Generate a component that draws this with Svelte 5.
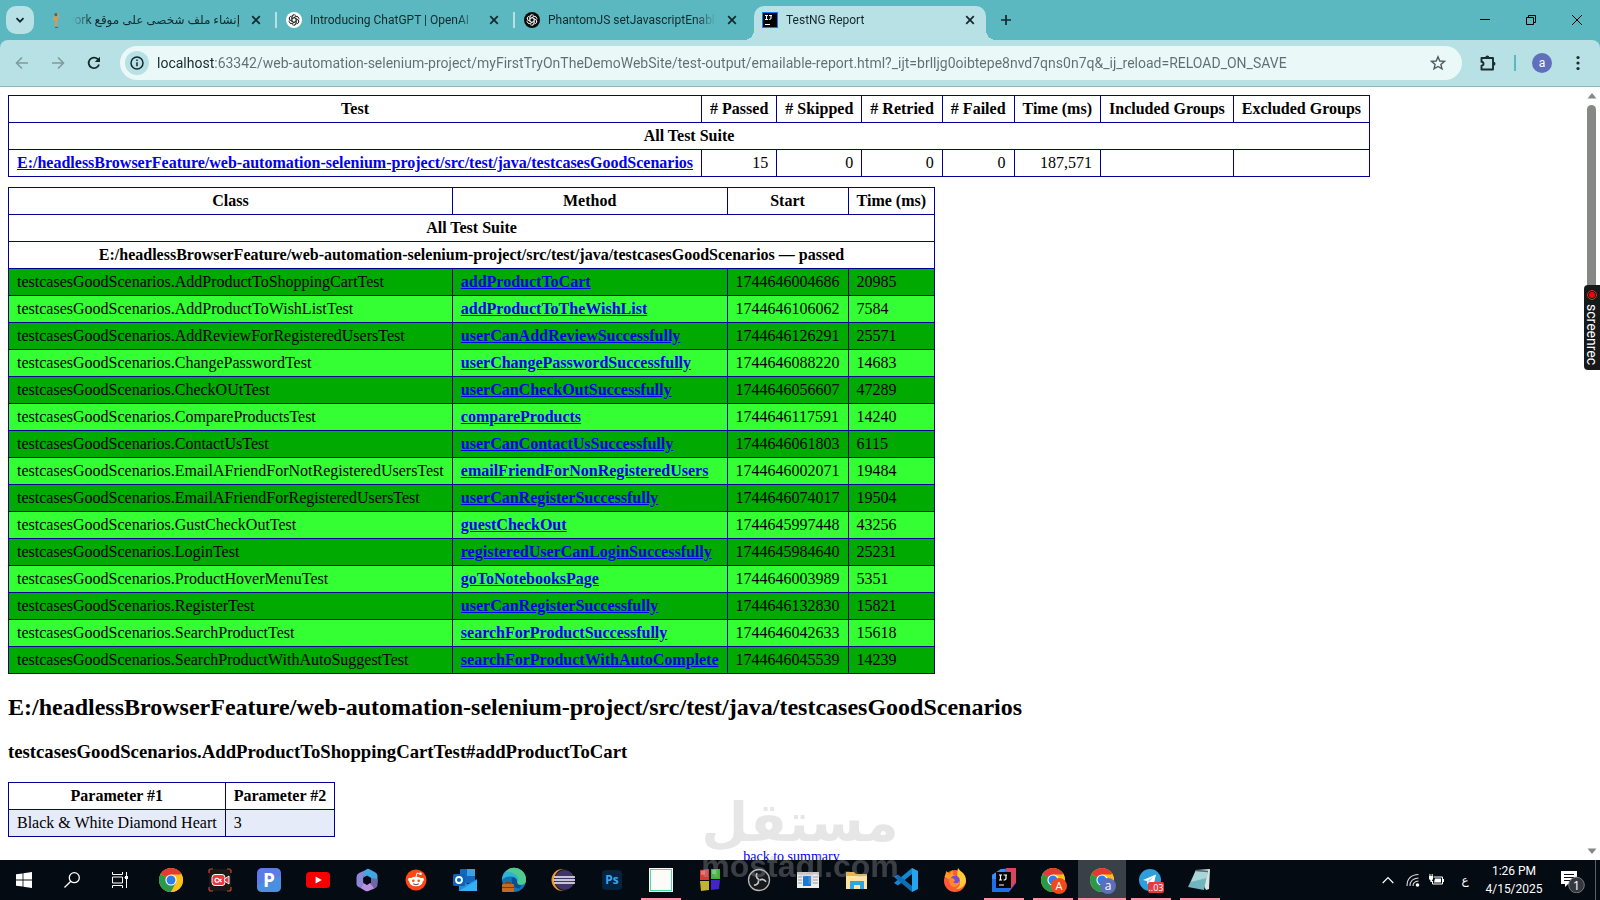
<script lang="ts">
  type Tab = { title: string; icon: string; active?: boolean; rtl?: boolean };
  type App = { name: string; label: string; open?: boolean; active?: boolean };

  const tabs: Tab[] = [
    { title: "إنشاء ملف شخصى على موقع Upwork", icon: "person", rtl: true },
    { title: "Introducing ChatGPT | OpenAI", icon: "openai" },
    { title: "PhantomJS setJavascriptEnabled Issue", icon: "openai-dark" },
    { title: "TestNG Report", icon: "intellij", active: true },
  ];

  let url = $state(
    "localhost:63342/web-automation-selenium-project/myFirstTryOnTheDemoWebSite/test-output/emailable-report.html?_ijt=brlljg0oibtepe8nvd7qns0n7q&_ij_reload=RELOAD_ON_SAVE",
  );

  const suite =
    "E:/headlessBrowserFeature/web-automation-selenium-project/src/test/java/testcasesGoodScenarios";

  const pkg = "testcasesGoodScenarios";
  const results: [string, string, string, string][] = [
    ["AddProductToShoppingCartTest", "addProductToCart", "1744646004686", "20985"],
    ["AddProductToWishListTest", "addProductToTheWishList", "1744646106062", "7584"],
    ["AddReviewForRegisteredUsersTest", "userCanAddReviewSuccessfully", "1744646126291", "25571"],
    ["ChangePasswordTest", "userChangePasswordSuccessfully", "1744646088220", "14683"],
    ["CheckOUtTest", "userCanCheckOutSuccessfully", "1744646056607", "47289"],
    ["CompareProductsTest", "compareProducts", "1744646117591", "14240"],
    ["ContactUsTest", "userCanContactUsSuccessfully", "1744646061803", "6115"],
    ["EmailAFriendForNotRegisteredUsersTest", "emailFriendForNonRegisteredUsers", "1744646002071", "19484"],
    ["EmailAFriendForRegisteredUsersTest", "userCanRegisterSuccessfully", "1744646074017", "19504"],
    ["GustCheckOutTest", "guestCheckOut", "1744645997448", "43256"],
    ["LoginTest", "registeredUserCanLoginSuccessfully", "1744645984640", "25231"],
    ["ProductHoverMenuTest", "goToNotebooksPage", "1744646003989", "5351"],
    ["RegisterTest", "userCanRegisterSuccessfully", "1744646132830", "15821"],
    ["SearchProductTest", "searchForProductSuccessfully", "1744646042633", "15618"],
    ["SearchProductWithAutoSuggestTest", "searchForProductWithAutoComplete", "1744646045539", "14239"],
  ];

  const apps: App[] = [
    { name: "chrome", label: "Chrome" },
    { name: "recorder", label: "Screen recorder" },
    { name: "picsart", label: "P" },
    { name: "youtube", label: "YouTube" },
    { name: "m365", label: "Microsoft 365" },
    { name: "reddit", label: "Reddit" },
    { name: "outlook", label: "Outlook" },
    { name: "edge", label: "Edge" },
    { name: "eclipse", label: "Eclipse" },
    { name: "photoshop", label: "Photoshop" },
    { name: "blank", label: "Window", open: true },
    { name: "blocks", label: "Blocks" },
    { name: "obs", label: "OBS Studio" },
    { name: "news", label: "Reader" },
    { name: "folder", label: "File Explorer" },
    { name: "vscode", label: "VS Code" },
    { name: "firefox", label: "Firefox" },
    { name: "idea", label: "IntelliJ IDEA", open: true },
    { name: "chrome-red", label: "Chrome, profile A", open: true },
    { name: "chrome-blue", label: "Chrome, profile a", open: true, active: true },
    { name: "telegram", label: "Telegram", open: true },
    { name: "notepad", label: "Notepad", open: true },
  ];
</script>

{#snippet cross()}
  <svg width="10" height="10" viewBox="0 0 10 10" aria-hidden="true">
    <path d="M1.2 1.2l7.6 7.6M8.8 1.2L1.2 8.8" fill="none" stroke="#14282b" stroke-width="1.7" />
  </svg>
{/snippet}

{#snippet knot(bg: string, fg: string)}
  <svg width="16" height="16" viewBox="0 0 16 16" aria-hidden="true">
    <circle cx="8" cy="8" r="8" fill={bg} />
    <g fill="none" stroke={fg} stroke-width="0.8">
      {#each [0, 60, 120, 180, 240, 300] as angle}
        <path transform="rotate({angle} 8 8)" d="M6 8.8V5.1a2.3 2.3 0 0 1 4-1.5M6.2 6.5l3.3-1.9a2.3 2.3 0 0 1 3.1.9" />
      {/each}
    </g>
  </svg>
{/snippet}

{#snippet favicon(name: string)}
  {#if name === "person"}
    <svg width="16" height="16" viewBox="0 0 16 16" aria-hidden="true">
      <circle cx="8" cy="2.6" r="1.6" fill="#7a5440" />
      <path d="M6.4 4.6h3l.4 4.4H6.6z" fill="#f0953a" />
      <path d="M9.6 1.5l1.2 3.6-1 .8M6.4 5L5.2 8" fill="none" stroke="#e2a06b" stroke-width="1" />
      <path d="M6.8 9h2.8l-.4 6H7.6z" fill="#c99b6b" />
      <path d="M7 15.4h3" stroke="#4a5d60" stroke-width="1" />
    </svg>
  {:else if name === "openai"}
    {@render knot("#ffffff", "#222222")}
  {:else if name === "openai-dark"}
    {@render knot("#0b0b0b", "#eeeeee")}
  {:else}
    <svg width="16" height="16" viewBox="0 0 16 16" aria-hidden="true">
      <rect width="16" height="16" fill="#087cfa" />
      <rect x="1" y="1" width="14" height="14" fill="#000" />
      <path d="M3 3.5h3M4.5 3.5v4M3 7.5h3M7 3.5h3M9 3.5v2.8q0 1.2-1.9 1.2M3 12.5h5" fill="none" stroke="#fff" stroke-width="1.1" />
    </svg>
  {/if}
{/snippet}

{#snippet chromeBall()}
  <circle cx="12" cy="12" r="12" fill="#fbc116" />
  <path d="M12 12L1.6 6A12 12 0 0 1 22.4 6z" fill="#e33b2e" />
  <path d="M12 12L1.6 6A12 12 0 0 0 12 24l5.2-9z" fill="#2a9a4a" />
  <path d="M12 6.5h10.7A12 12 0 0 1 12 24l4.8-9.3z" fill="#fbc116" />
  <circle cx="12" cy="12" r="5.6" fill="#fff" />
  <circle cx="12" cy="12" r="4.5" fill="#2f7de9" />
{/snippet}

{#snippet appIcon(name: string)}
  <svg width="24" height="24" viewBox="0 0 24 24" class="app-icon" aria-hidden="true">
    {#if name === "chrome"}
      {@render chromeBall()}
    {:else if name === "recorder"}
      <rect x="1" y="1" width="22" height="22" rx="3" fill="#1b1716" />
      <path d="M1 5V3q0-2 2-2h2M19 1h2q2 0 2 2v2M23 19v2q0 2-2 2h-2M5 23H3q-2 0-2-2v-2" fill="none" stroke="#c4492c" stroke-width="1.2" />
      <rect x="4" y="6.5" width="13" height="11" rx="3" fill="#e5383f" stroke="#fff" />
      <path d="M16.5 11l4.5-3v8l-4.5-3z" fill="#e5383f" stroke="#fff" />
      <path d="M13.500 14L10.500 11a2 2 0 1 0 0 2.500l3-2.500" fill="none" stroke="#fff" stroke-width="1.2" />
    {:else if name === "picsart"}
      <rect width="24" height="24" rx="5" fill="#5b7be6" />
      <path d="M0 17L24 8v11q0 5-5 5H5q-5 0-5-5z" fill="#4398de" opacity=".7" />
      <text x="12" y="19" text-anchor="middle" class="bold" font-size="19" fill="#fff">P</text>
    {:else if name === "youtube"}
      <rect y="4" width="24" height="16" rx="3.5" fill="#f60002" />
      <path d="M9.6 8.5l6.2 3.5-6.2 3.5z" fill="#fff" />
    {:else if name === "m365"}
      <path d="M13 1L4 5Q1.500 6.500 1.500 9v7q0 2 2 3l2 1 3-4.500V8.500L14 5z" fill="#8d86d6" />
      <path d="M12 1q1-.5 2 0l6.500 3.500q2 1 2 3.500v7l-6.500-5-4-2.500-3.500 2V4z" fill="#42a6e2" />
      <path d="M22.500 11v6q0 2-2 3l-3 1.500-3.500-5.500 2-1V10z" fill="#7265a6" />
      <path d="M5.500 20L8.500 15l3.500 2 3-2 4 5.500-5.500 2.500q-1.500.7-3 0z" fill="#b890e2" />
      <path d="M12 8l4 2.200v4L12 16.500l-3.800-2.200v-4z" fill="#050b13" />
    {:else if name === "reddit"}
      <circle cx="12" cy="12" r="10.500" fill="#ff4712" />
      <ellipse cx="12" cy="13.500" rx="6.800" ry="4.800" fill="#fff" />
      <circle cx="5.800" cy="11.500" r="1.800" fill="#fff" /><circle cx="18.200" cy="11.500" r="1.800" fill="#fff" />
      <circle cx="9.300" cy="12.800" r="1.300" fill="#ff4712" /><circle cx="14.700" cy="12.800" r="1.300" fill="#ff4712" />
      <path d="M9.200 15.800q2.800 2 5.600 0" fill="none" stroke="#333" stroke-width=".9" />
      <path d="M12 9l1-4 3 .8" fill="none" stroke="#fff" /><circle cx="16.500" cy="5.800" r="1.300" fill="#fff" />
    {:else if name === "outlook"}
      <rect x="7" y="1" width="15" height="14" rx="1" fill="#1567bd" />
      <path d="M14 1h8v7h-8z" fill="#3aa0e8" />
      <path d="M6 12l9 4 9-5v12H6z" fill="#1d8fe0" />
      <path d="M6 23l18-11v11z" fill="#35b0f2" />
      <rect y="6" width="12" height="12" rx="1.500" fill="#0c62b8" />
      <circle cx="6" cy="12" r="3" fill="none" stroke="#fff" stroke-width="1.800" />
    {:else if name === "edge"}
      <circle cx="12" cy="12" r="12" fill="#1273b8" />
      <path d="M0 12A12 12 0 0 1 24 11.500q0 5-5.500 5.300-4 0-3.500-2.800.3-5-5-5.500Q3 8 0 12z" fill="#2fb4cf" />
      <path d="M10 0a12 12 0 0 1 14 12q0 4.500-5 4.800-3.500 0-3.500-2.300 2.500-5.500-2-8Q9 3 4 4q2.500-3.500 6-4z" fill="#4fcb8c" />
      <path d="M10 9.500q5.500.5 5 4.500 0 3 4.500 3.500l-2 3-5-1q-4-4-2.500-10z" fill="#0a4f8f" />
      <rect y="16" width="12" height="8" rx="1" fill="#c66a20" />
      <path d="M4 16v-1.500h4V16M0 19.500h12" fill="none" stroke="#7b3b10" />
    {:else if name === "eclipse"}
      <circle cx="11.500" cy="12" r="11" fill="#f19433" />
      <circle cx="14" cy="12" r="11" fill="#080d15" />
      <circle cx="13.500" cy="12" r="10" fill="#3f3568" />
      <path d="M3 9h21M2.500 12H24M3 15h21" stroke="#f3f3f6" stroke-width="1.500" />
    {:else if name === "photoshop"}
      <rect x="2" y="2" width="20" height="20" rx="4" fill="#05233c" />
      <text x="12" y="16" text-anchor="middle" class="bold" font-size="12" fill="#35a6f5">Ps</text>
    {:else if name === "blank"}
      <rect width="24" height="24" fill="#fff" />
      <rect x="1.500" y="1.500" width="21" height="21" fill="#fbfbf7" stroke="#45dda0" />
    {:else if name === "blocks"}
      <path d="M2 2l9-1v11H2z" fill="#d83a31" /><path d="M13 1h9v10h-9z" fill="#3db636" />
      <path d="M2 13h9v9l-8 1z" fill="#c1b233" /><path d="M13 12h9l-1 9-8 1z" fill="#4424c4" />
      <path d="M3 3l4-.5v4L3 7zM14 2h4v4h-4z" fill="#fff" opacity=".3" />
    {:else if name === "obs"}
      <circle cx="12" cy="12" r="10.500" fill="#18191d" stroke="#b8b8ba" stroke-width="1.300" />
      <g fill="none" stroke="#c7c7ca" stroke-width="1.600">
        {#each [0, 120, 240] as angle}
          <path transform="rotate({angle} 12 12)" d="M12 11.500q-4-2-2-6.500" />
        {/each}
      </g>
    {:else if name === "news"}
      <path d="M1 4h22v16H1z" fill="#eeeeec" /><path d="M1 4h22v2.500H1z" fill="#c9cbcb" />
      <path d="M7 8h8v10H7z" fill="#1679d3" />
      <path d="M17 9h5M17 12h5M17 15h5M2 9h4M2 12h4M2 15h4" stroke="#9a9a9a" />
    {:else if name === "folder"}
      <path d="M1 4h8l2 2h11v15H1z" fill="#e9b44b" /><path d="M1 8h21v13H1z" fill="#ffe4a0" />
      <path d="M5 21v-8h14v8h-4v-4H9v4z" fill="#31a5df" />
    {:else if name === "vscode"}
      <path d="M18 0l6 3v18l-6 3z" fill="#24a5f0" />
      <path d="M18 0v6L4 17.500 0 15z" fill="#1587d1" /><path d="M18 24v-6L4 6.500 0 9z" fill="#0b6fb8" />
    {:else if name === "firefox"}
      <circle cx="12" cy="13" r="11" fill="#ff5a30" />
      <path d="M15 0q2 3 5 5 4 5 2.500 10-3 6-9.500 6 6-4 3-9-3-4-1-12z" fill="#ffcb35" />
      <path d="M1.500 9L3.500 3l3 3 3-4 1 5 4 2-4 1.500-4 1z" fill="#ff9a2c" />
      <circle cx="12" cy="12.500" r="4.800" fill="#7a49d8" />
      <path d="M6 11q3-2 5 0t-1 3q3 3 7-1-1 6-6 6-5-1-5-8z" fill="#ff8a2b" />
    {:else if name === "idea"}
      <path d="M0 7l9-6 15-1v15l-7 9H0z" fill="#1f6fe8" />
      <path d="M14 0h10v14l-6 8z" fill="#d8455c" /><path d="M0 7l9-6h5l-5 10H0z" fill="#3c8cf5" />
      <rect x="4" y="4" width="15" height="16" fill="#050505" />
      <path d="M7 7h3M8.500 7v5M7 12h3M11.500 7H15M14 7v3.500q0 1.500-2.500 1.500M7 17h5" fill="none" stroke="#fff" stroke-width="1.200" />
    {:else if name === "chrome-red"}
      {@render chromeBall()}
      <circle cx="18" cy="18" r="8" fill="#f04a1b" />
      <text x="18" y="22" text-anchor="middle" font-size="11" fill="#fff">A</text>
    {:else if name === "chrome-blue"}
      {@render chromeBall()}
      <circle cx="18" cy="18" r="8" fill="#5b6fbb" />
      <text x="18" y="22" text-anchor="middle" font-size="12" fill="#fff">a</text>
    {:else if name === "telegram"}
      <circle cx="11" cy="12" r="11" fill="#2f9fd9" />
      <path d="M4 12l13-5.500-2.500 11-4-3-2 2-.5-3.500z" fill="#fff" /><path d="M8 13l6-4-3.500 5" fill="#a9d5ec" />
      <rect x="9" y="14" width="16" height="11" rx="2" fill="#e93b3d" />
      <text x="17" y="23" text-anchor="middle" font-size="9" fill="#fff">..03</text>
    {:else}
      <path d="M8 2l14-1-1 20-3 1z" fill="#dfe3df" />
      <path d="M8 2l12 1-4 19-16-3z" fill="#70b5bd" /><path d="M8 2l12 1-1.500 7L3 14z" fill="#a9d6d9" />
      <path d="M8 2.500l12 1" stroke="#596368" stroke-width="1.500" />
    {/if}
  </svg>
{/snippet}

<div class="screen">
  <header class="tabstrip">
    <button class="search-tabs" type="button" aria-label="Search tabs">
      <svg width="10" height="10" viewBox="0 0 10 10" aria-hidden="true"><path d="M1.500 3.200L5 6.700l3.500-3.500" fill="none" stroke="#14282b" stroke-width="1.800" /></svg>
    </button>
    <div class="tabs">
      {#each tabs as tab}
        <div class="tab" class:active={tab.active}>
          {@render favicon(tab.icon)}
          <button class="title" class:rtl={tab.rtl} type="button" dir={tab.rtl ? "rtl" : "ltr"}>{tab.title}</button>
          <button class="close" type="button" aria-label="Close tab">{@render cross()}</button>
        </div>
      {/each}
    </div>
    <button class="new-tab" type="button" aria-label="New tab">
      <svg width="12" height="12" viewBox="0 0 12 12" aria-hidden="true"><path d="M6 1v10M1 6h10" stroke="#14282b" stroke-width="1.700" /></svg>
    </button>
    <div class="window-buttons">
      <button type="button" aria-label="Minimize">
        <svg width="12" height="12" viewBox="0 0 12 12" aria-hidden="true"><path d="M1 5.500h10" stroke="#000" /></svg>
      </button>
      <button type="button" aria-label="Restore">
        <svg width="12" height="12" viewBox="0 0 12 12" aria-hidden="true"><path d="M1.500 3.500h7v7h-7zM3.500 3.500v-2h7v7h-2" fill="none" stroke="#000" /></svg>
      </button>
      <button type="button" aria-label="Close">
        <svg width="12" height="12" viewBox="0 0 12 12" aria-hidden="true"><path d="M1 1l10 10M11 1L1 11" stroke="#000" /></svg>
      </button>
    </div>
  </header>

  <div class="toolbar-back">
    <div class="toolbar">
      <button class="tool" type="button" aria-label="Back" disabled>
        <svg width="14" height="14" viewBox="0 0 14 14" aria-hidden="true"><path d="M13 7H2M7 1.500L1.500 7 7 12.500" fill="none" stroke="#7f9b9e" stroke-width="1.600" /></svg>
      </button>
      <button class="tool" type="button" aria-label="Forward" disabled>
        <svg width="14" height="14" viewBox="0 0 14 14" aria-hidden="true"><path d="M1 7h11M7 1.500L12.500 7 7 12.500" fill="none" stroke="#7f9b9e" stroke-width="1.600" /></svg>
      </button>
      <button class="tool" type="button" aria-label="Reload">
        <svg width="14" height="14" viewBox="0 0 14 14" aria-hidden="true"><path d="M12 8.500A5.300 5.300 0 1 1 10.800 3.200L12 4.500" fill="none" stroke="#14282b" stroke-width="1.800" /><path d="M13 .8V6H7.800z" fill="#14282b" /></svg>
      </button>
      <div class="omnibox">
        <button class="site-info" type="button" aria-label="View site information">
          <svg width="14" height="14" viewBox="0 0 14 14" aria-hidden="true"><circle cx="7" cy="7" r="6" fill="none" stroke="#14282b" stroke-width="1.500" /><path d="M7 6.200v4M7 3.500v1.500" stroke="#14282b" stroke-width="1.500" /></svg>
        </button>
        <input class="url" type="text" aria-label="Address and search bar" spellcheck="false" bind:value={url} />
        <button class="star" type="button" aria-label="Bookmark this tab">
          <svg width="16" height="16" viewBox="0 0 16 16" aria-hidden="true"><path d="M8 1.800l1.800 4.200 4.600.4-3.500 3 1.100 4.500L8 11.500l-4 2.400 1.100-4.500-3.500-3L6.200 6z" fill="none" stroke="#4d5c5e" stroke-width="1.400" /></svg>
        </button>
      </div>
      <div class="tools">
        <button class="tool" type="button" aria-label="Extensions">
          <svg width="18" height="18" viewBox="0 0 18 18" aria-hidden="true"><path d="M2.500 4H14v11.500H2.500v-3.700q2-.3 2-2t-2-2z" fill="none" stroke="#1c2b2e" stroke-width="1.900" stroke-linejoin="round" /><path d="M6.300 3.500a2 2 0 0 1 4 0zM14.500 7.700a2 2 0 0 1 0 4z" fill="#1c2b2e" /></svg>
        </button>
        <span class="rule"></span>
        <button class="avatar" type="button" aria-label="Profile">a</button>
        <button class="tool menu" type="button" aria-label="Menu">
          <svg width="4" height="16" viewBox="0 0 4 16" aria-hidden="true"><g fill="#1c2b2e"><circle cx="2" cy="2.500" r="1.600" /><circle cx="2" cy="8" r="1.600" /><circle cx="2" cy="13.500" r="1.600" /></g></svg>
        </button>
      </div>
    </div>
  </div>

  <div class="viewport">
    <main class="report">
      <table>
        <thead>
          <tr>
            <th>Test</th>
            <th># Passed</th>
            <th># Skipped</th>
            <th># Retried</th>
            <th># Failed</th>
            <th>Time (ms)</th>
            <th>Included Groups</th>
            <th>Excluded Groups</th>
          </tr>
          <tr><th colspan="8">All Test Suite</th></tr>
        </thead>
        <tbody>
          <tr>
            <td><a href="#t0">{suite}</a></td>
            <td class="num">15</td>
            <td class="num">0</td>
            <td class="num">0</td>
            <td class="num">0</td>
            <td class="num">187,571</td>
            <td></td>
            <td></td>
          </tr>
        </tbody>
      </table>

      <table id="summary">
        <thead>
          <tr>
            <th>Class</th>
            <th>Method</th>
            <th>Start</th>
            <th>Time (ms)</th>
          </tr>
          <tr><th colspan="4">All Test Suite</th></tr>
        </thead>
        <tbody id="t0">
          <tr><th colspan="4">{suite} — passed</th></tr>
          {#each results as [cls, method, start, time], i}
            <tr class={i % 2 ? "passed-odd" : "passed-even"}>
              <td>{pkg}.{cls}</td>
              <td><a href="#m{i}">{method}</a></td>
              <td>{start}</td>
              <td>{time}</td>
            </tr>
          {/each}
        </tbody>
      </table>

      <h2>{suite}</h2>
      <h3 id="m0">{pkg}.AddProductToShoppingCartTest#addProductToCart</h3>
      <table>
        <thead>
          <tr><th>Parameter #1</th><th>Parameter #2</th></tr>
        </thead>
        <tbody>
          <tr class="stripe"><td>Black &amp; White Diamond Heart</td><td>3</td></tr>
        </tbody>
      </table>
      <p class="totop"><a href="#summary">back to summary</a></p>
    </main>
    <div class="scrollbar">
      <svg width="10" height="6" viewBox="0 0 10 6" aria-hidden="true"><path d="M5 0l4.500 5.500h-9z" fill="#868886" /></svg>
      <div class="track"><div class="thumb"></div></div>
      <svg width="10" height="6" viewBox="0 0 10 6" aria-hidden="true"><path d="M5 6L.5.5h9z" fill="#868886" /></svg>
    </div>
    <button class="screenrec" type="button">
      <svg width="10" height="10" viewBox="0 0 10 10" aria-hidden="true"><circle cx="5" cy="5" r="4.500" fill="none" stroke="#b5401c" /><circle cx="5" cy="5" r="3" fill="#f50505" /></svg>
      <span>screenrec</span>
    </button>
  </div>

  <footer class="taskbar">
    <button class="system" type="button" aria-label="Start">
      <svg width="16" height="16" viewBox="0 0 16 16" aria-hidden="true"><path d="M0 2.300L6.600 1.400v6.200H0zM7.400 1.300L16 0v7.600H7.400zM0 8.400h6.600v6.200L0 13.700zM7.400 8.400H16V16l-8.600-1.300z" fill="#fff" /></svg>
    </button>
    <button class="system" type="button" aria-label="Search">
      <svg width="16" height="16" viewBox="0 0 16 16" aria-hidden="true"><circle cx="10.300" cy="5.700" r="5" fill="none" stroke="#fff" stroke-width="1.300" /><path d="M6.800 9.200L.5 15.500" stroke="#fff" stroke-width="1.300" /></svg>
    </button>
    <button class="system" type="button" aria-label="Task view">
      <svg width="16" height="16" viewBox="0 0 16 16" aria-hidden="true"><path d="M.5 0v2.500h10V0M.5 16v-2.500h10V16M.5 5h10v6H.5zM14.500 0v16M12.500 5.500h3" fill="none" stroke="#fff" /><path d="M13 4h3v3h-3z" fill="#fff" /></svg>
    </button>
    <div class="apps">
      {#each apps as app}
        <button class="app" class:open={app.open} class:focused={app.active} type="button" aria-label={app.label}>
          {@render appIcon(app.name)}
        </button>
      {/each}
    </div>
    <div class="tray">
      <svg width="12" height="8" viewBox="0 0 12 8" aria-hidden="true"><path d="M.7 7L6 1.500 11.300 7" fill="none" stroke="#fff" stroke-width="1.200" /></svg>
      <svg width="14" height="14" viewBox="0 0 14 14" aria-hidden="true"><g fill="none" stroke="#ddd" stroke-width="1.100"><path d="M1 13Q1 2 12.500 1.500M4 13q0-7.500 8.500-8M7 13q0-4.500 5.500-5" /></g><circle cx="11.500" cy="12" r="1.800" fill="#fff" /></svg>
      <svg width="16" height="14" viewBox="0 0 16 14" aria-hidden="true"><path d="M5.500 4h9v7H4.500V8" fill="none" stroke="#fff" /><path d="M7 5.500h6v4H6zM15 6h1v3h-1zM1 3h4v3L4 7.500V9H2.500V7.500L1 6zM1.500 1h1v2h-1zM3.700 1h1v2h-1z" fill="#fff" /></svg>
      <span class="lang">ع</span>
      <div class="clock"><span>1:26 PM</span><span>4/15/2025</span></div>
      <button class="notifications" type="button" aria-label="Notifications">
        <svg width="26" height="26" viewBox="0 0 26 26" aria-hidden="true"><path d="M1 4h16v13h-9l-3 3v-3H1z" fill="#fff" /><path d="M4 7.500h10M4 10.500h10M4 13.500h6" stroke="#0a0f17" /><circle cx="16.500" cy="18" r="7.800" fill="#34383e" stroke="#74777b" /><text x="16.500" y="23" text-anchor="middle" font-size="13" fill="#fff">1</text></svg>
      </button>
      <span class="show-desktop"></span>
    </div>
  </footer>

  <div class="watermark">
    <span class="mark-ar" lang="ar">مستقل</span>
    <span class="mark-en">mostaql.com</span>
  </div>
</div>

<style>
  :global(body) {
    background: #fff;
  }
  .screen {
    position: relative;
    display: flex;
    flex-direction: column;
    height: 100vh;
    overflow: hidden;
    font: 12px/16px Roboto, "Noto Sans", "DejaVu Sans", sans-serif;
  }
  button {
    display: flex;
    align-items: center;
    justify-content: center;
    margin: 0;
    padding: 0;
    border: 0;
    background: none;
    color: inherit;
    font: inherit;
  }
  svg {
    flex: none;
    display: block;
  }
  svg text {
    font-family: "Open Sans", sans-serif;
  }
  svg .bold {
    font-weight: 700;
  }

  /* Tab strip */
  .tabstrip {
    display: flex;
    flex: none;
    height: 40px;
    padding-left: 6px;
    background: #5bb8c1;
    color: #14282b;
  }
  .search-tabs {
    flex: none;
    width: 28px;
    height: 28px;
    margin: 6px 6px 0 0;
    border-radius: 10px;
    background: #b8e1e5;
  }
  .tabs {
    display: flex;
    min-width: 0;
    padding-top: 6px;
  }
  .tab {
    position: relative;
    display: flex;
    flex: 0 1 238px;
    width: 238px;
    min-width: 0;
    height: 34px;
    padding: 0 14px 6px 8px;
    box-sizing: border-box;
    align-items: center;
    gap: 8px;
  }
  .tab.active {
    flex-basis: 232px;
    width: 232px;
    padding-right: 8px;
    border-radius: 10px 10px 0 0;
    background: #b8e1e5;
  }
  /* Divider on the left of each idle tab but the first */
  .tab:not(.active) + .tab:not(.active)::before {
    content: "";
    position: absolute;
    left: -3px;
    top: 6px;
    width: 2px;
    height: 16px;
    background: #b8e1e5;
  }
  /* Feet that flare out into the toolbar */
  .tab.active::before,
  .tab.active::after {
    content: "";
    position: absolute;
    bottom: 0;
    width: 10px;
    height: 10px;
  }
  .tab.active::before {
    right: 100%;
    background: radial-gradient(circle at 0 0, transparent 10px, #b8e1e5 10px);
  }
  .tab.active::after {
    left: 100%;
    background: radial-gradient(circle at 100% 0, transparent 10px, #b8e1e5 10px);
  }
  .title {
    flex: 1;
    min-width: 0;
    display: block;
    overflow: hidden;
    white-space: nowrap;
    text-align: start;
    mask-image: linear-gradient(to left, transparent, #000 20px);
  }
  .title.rtl {
    mask-image: linear-gradient(to right, transparent, #000 20px);
  }
  .close {
    width: 16px;
    height: 16px;
  }
  .new-tab {
    width: 28px;
    height: 28px;
    margin: 6px 0 0 6px;
  }
  .window-buttons {
    display: flex;
    margin-left: auto;
  }
  .window-buttons button {
    width: 46px;
    height: 40px;
  }

  /* Toolbar */
  .toolbar-back {
    flex: none;
    background: #5bb8c1;
  }
  .toolbar {
    display: flex;
    align-items: center;
    height: 46px;
    padding-left: 4px;
    border-bottom: 1px solid #8fb5b9;
    border-radius: 8px 8px 0 0;
    background: #b8e1e5;
  }
  .tool {
    width: 36px;
    height: 34px;
  }
  .omnibox {
    display: flex;
    align-items: center;
    flex: 1;
    min-width: 0;
    height: 34px;
    margin-left: 8px;
    padding: 0 16px 0 5px;
    box-sizing: border-box;
    border-radius: 17px;
    background: #ebf8f8;
  }
  .site-info {
    flex: none;
    width: 24px;
    height: 24px;
    border-radius: 50%;
    background: #b8e1e5;
  }
  /* The host is dark and the rest of the address is grey: one gradient, cut by the text */
  .url {
    flex: 1;
    min-width: 0;
    height: 24px;
    margin: 0 8px;
    padding: 0;
    border: 0;
    outline: 0;
    background: linear-gradient(to right, #14282b 57px, #5d6f72 57px);
    background-clip: text;
    color: transparent;
    font: 14px/24px Roboto, "Noto Sans", sans-serif;
  }
  .tools {
    display: flex;
    align-items: center;
    padding-left: 8px;
  }
  .rule {
    width: 2px;
    height: 16px;
    margin: 0 16px 0 8px;
    background: #5bb8c1;
  }
  .avatar {
    width: 20px;
    height: 20px;
    margin-right: 4px;
    border-radius: 50%;
    background: #5f6fbc;
    color: #fff;
  }
  .menu {
    width: 44px;
  }

  /* Report page */
  .viewport {
    position: relative;
    display: flex;
    flex: 1;
    min-height: 0;
    overflow: hidden;
    background: #fff;
  }
  .report {
    flex: 1;
    min-width: 0;
    padding: 8px;
    color: #000;
    font: 16px/normal "Liberation Serif", "Times New Roman", serif;
  }
  .report table {
    margin-bottom: 10px;
    border-collapse: collapse;
    empty-cells: show;
  }
  .report th,
  .report td {
    border: 1px solid #009;
    padding: 4px 8px;
  }
  .report td {
    vertical-align: top;
  }
  .report a {
    color: #00e;
  }
  .report table a {
    font-weight: bold;
  }
  .report .num {
    text-align: right;
  }
  .report .stripe td {
    background: #e6ebf9;
  }
  .report .passed-odd td {
    background: #3f3;
  }
  .report .passed-even td {
    background: #0a0;
  }
  .totop {
    margin: 12px 0;
    font-size: 14px;
    text-align: center;
  }
  .scrollbar {
    display: flex;
    flex-direction: column;
    align-items: center;
    width: 17px;
    padding: 6px 0;
    box-sizing: border-box;
  }
  .track {
    flex: 1;
    padding: 6px 0;
  }
  .thumb {
    width: 9px;
    height: 25%;
    min-height: 40px;
    border-radius: 5px;
    background: #868886;
  }
  .screenrec {
    position: absolute;
    top: 198px;
    right: 0;
    flex-direction: column;
    gap: 4px;
    width: 16px;
    height: 85px;
    border-radius: 4px 0 0 4px;
    background: #16181a;
    color: #fff;
    font-size: 14px;
  }
  .screenrec span {
    writing-mode: vertical-rl;
  }

  /* Taskbar */
  .taskbar {
    display: flex;
    flex: none;
    height: 40px;
    background: #050b13;
    color: #fff;
  }
  .system {
    flex: none;
    width: 48px;
  }
  .apps {
    display: flex;
    min-width: 0;
    gap: 1px;
    margin-left: 3px;
  }
  .app {
    position: relative;
    width: 48px;
    height: 40px;
  }
  .app-icon {
    overflow: visible;
  }
  .app.open::after {
    content: "";
    position: absolute;
    bottom: 0;
    left: 4px;
    right: 4px;
    height: 2px;
    background: #ff949c;
  }
  .app.focused {
    background: #3a4047;
  }
  .app.focused::after {
    left: 0;
    right: 0;
  }
  .tray {
    display: flex;
    align-items: center;
    margin-left: auto;
  }
  .tray > svg {
    margin-right: 8px;
  }
  .tray > svg:first-child {
    margin-right: 12px;
  }
  .lang {
    width: 26px;
    text-align: center;
  }
  .clock {
    display: flex;
    flex-direction: column;
    align-items: center;
    gap: 2px;
    width: 72px;
  }
  .notifications {
    width: 45px;
    height: 40px;
  }
  .show-desktop {
    width: 4px;
    height: 40px;
    border-left: 1px solid #5c6066;
  }

  /* Watermark over the lower middle of the screen */
  .watermark {
    position: absolute;
    bottom: 18px;
    left: 50%;
    display: flex;
    flex-direction: column;
    align-items: center;
    translate: -50% 0;
    color: #b2b2b2;
    opacity: 0.31;
    pointer-events: none;
  }
  .mark-ar {
    font: 700 54px/54px "DejaVu Sans", sans-serif;
  }
  .mark-en {
    font: 700 32px/32px "Liberation Sans", Arial, sans-serif;
  }
</style>
